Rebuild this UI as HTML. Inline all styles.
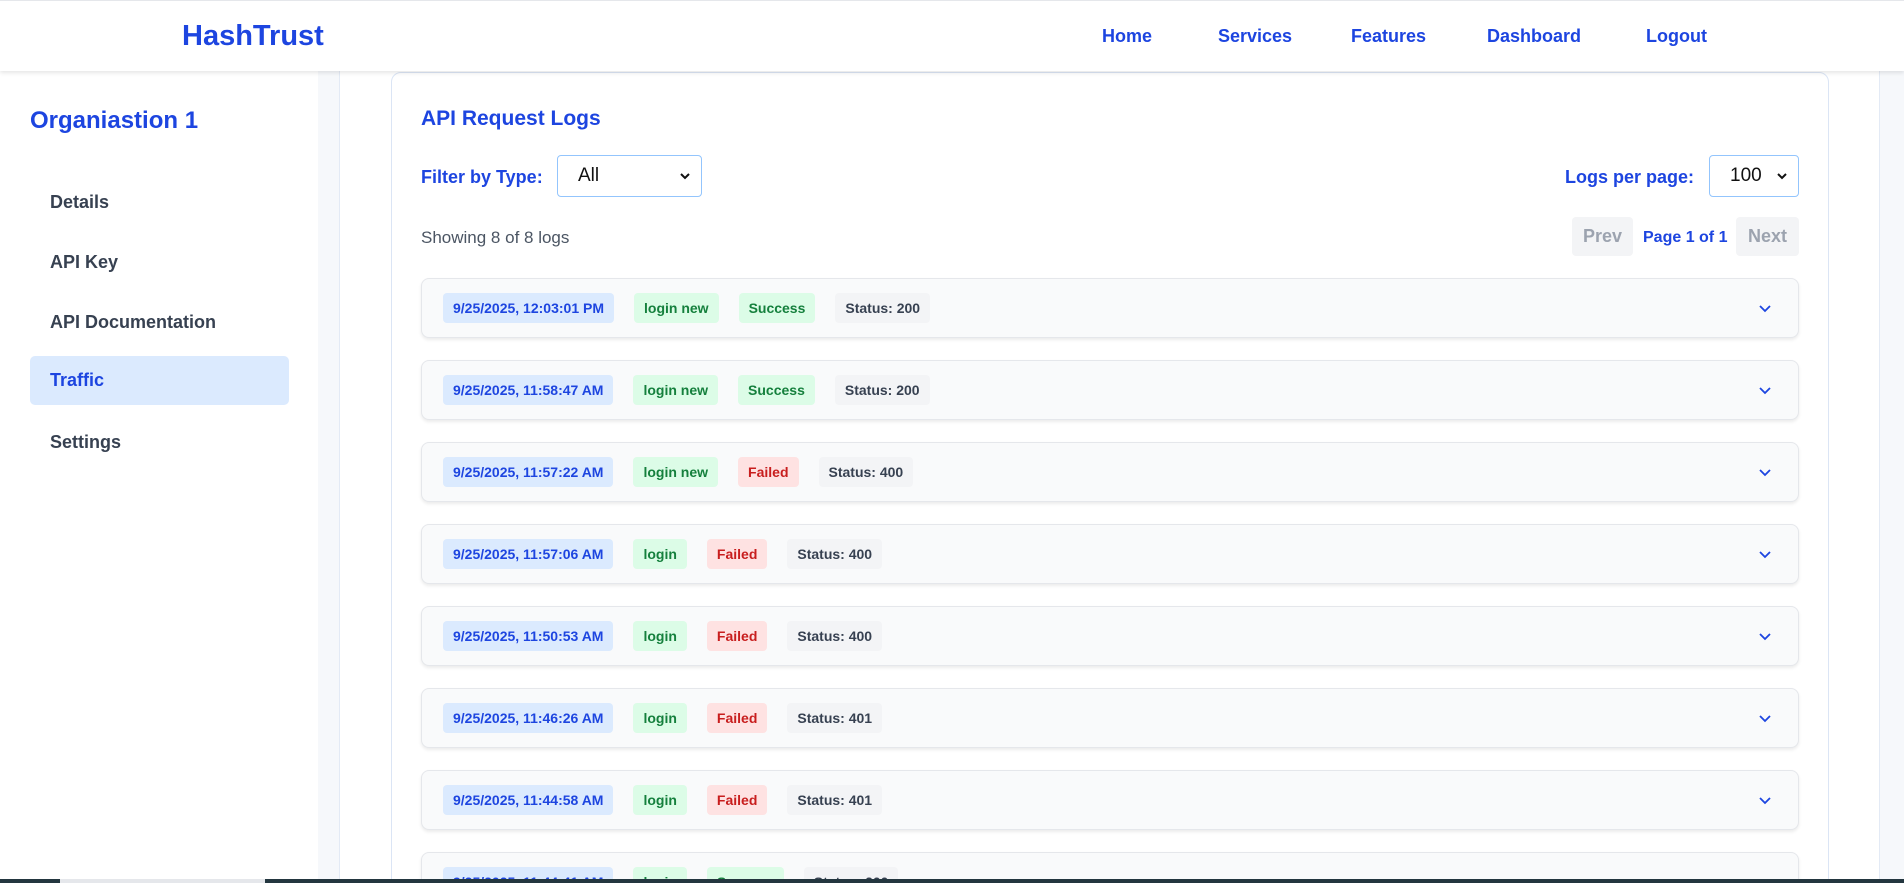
<!DOCTYPE html>
<html><head><meta charset="utf-8"><style>
*{box-sizing:border-box;margin:0;padding:0}
html,body{width:1904px;height:883px;overflow:hidden}
body{background:#fff;font-family:"Liberation Sans",sans-serif;position:relative}
.hdr{position:absolute;left:0;top:0;width:1904px;height:71px;background:#fff;box-shadow:0 2px 4px rgba(0,0,0,.1);z-index:5;border-top:1px solid #e5e7eb}
.logo{position:absolute;left:182px;top:19px;font-size:29px;font-weight:bold;color:#1d45e0}
.nav a{position:absolute;top:25px;font-size:18px;font-weight:bold;color:#1d45e0;text-decoration:none}
.side{position:absolute;left:0;top:71px;width:318px;height:812px;background:#fff}
.strip{position:absolute;left:318px;top:71px;width:22px;height:812px;background:#f6f8fb;border-right:1px solid #e3eaf5}
.rstrip{position:absolute;left:1879px;top:71px;width:25px;height:812px;background:#f6f8fb;border-left:1px solid #e3eaf5}
.org{position:absolute;left:30px;font-size:24px;font-weight:bold;color:#1d45e0}
.si{position:absolute;left:30px;width:259px;height:49px;line-height:49px;padding-left:20px;font-size:18px;font-weight:bold;color:#374151;border-radius:5px}
.si.act{background:#dbeafe;color:#1d45e0}
.card{position:absolute;left:391px;top:72px;width:1438px;height:830px;border:1px solid #dbe5f5;border-radius:10px;background:#fff}
.ttl{position:absolute;left:421px;top:107px;font-size:21px;font-weight:bold;color:#1d45e0}
.lbl{position:absolute;font-size:18px;font-weight:bold;color:#1d45e0}
.sel{position:absolute;height:42px;border:1px solid #93c5fd;border-radius:4px;background:#fff;font-size:19px;color:#111;padding-left:20px;line-height:40px}
.sel svg{position:absolute;right:10px;top:15px}
.show{position:absolute;left:421px;top:228px;font-size:17px;color:#4b5563}
.pb{position:absolute;top:217px;height:39px;background:#f3f4f6;border-radius:4px;color:#9ca3af;font-size:18px;font-weight:bold;text-align:center;line-height:39px}
.row{position:absolute;left:421px;width:1378px;height:60px;background:#f9fafb;border:1px solid #e5e7eb;border-radius:8px;box-shadow:0 2px 3px rgba(0,0,0,.08);display:flex;align-items:center;padding-left:21px}
.b{height:30px;line-height:30px;padding:0 10px;border-radius:4px;font-size:14px;font-weight:bold;margin-right:20px;white-space:nowrap}
.d{background:#dbeafe;color:#1d45e0}
.g{background:#dcfce7;color:#15803d}
.r{background:#fee2e2;color:#c81e1e}
.s{background:#f3f4f6;color:#374151}
.chev{position:absolute;right:26px;top:25px}
.bot{position:absolute;left:0;top:879px;width:1904px;height:4px;background:#23363f;z-index:9}
.bot i{position:absolute;left:60px;top:0;width:205px;height:4px;background:#e5e7eb}
</style></head><body>
<div class="hdr"><div class="logo">HashTrust</div>
<div class="nav"><a style="left:1102px">Home</a><a style="left:1218px">Services</a><a style="left:1351px">Features</a><a style="left:1487px">Dashboard</a><a style="left:1646px">Logout</a></div></div>
<div class="side">
<div class="org" style="top:36px">Organiastion 1</div>
<div class="si" style="top:107px">Details</div>
<div class="si" style="top:167px">API Key</div>
<div class="si" style="top:227px">API Documentation</div>
<div class="si act" style="top:285px">Traffic</div>
<div class="si" style="top:347px">Settings</div>
</div>
<div class="strip"></div><div class="rstrip"></div>
<div class="card"></div>
<div class="ttl">API Request Logs</div>
<div class="lbl" style="left:421px;top:167px">Filter by Type:</div>
<div class="sel" style="left:557px;top:155px;width:145px">All<svg width="12" height="10" viewBox="0 0 12 10"><path d="M2 3l4 4 4-4" stroke="#111" stroke-width="2" fill="none"/></svg></div>
<div class="lbl" style="left:1565px;top:167px">Logs per page:</div>
<div class="sel" style="left:1709px;top:155px;width:90px">100<svg width="12" height="10" viewBox="0 0 12 10"><path d="M2 3l4 4 4-4" stroke="#111" stroke-width="2" fill="none"/></svg></div>
<div class="show">Showing 8 of 8 logs</div>
<div class="pb" style="left:1572px;width:61px">Prev</div>
<div class="lbl" style="left:1643px;top:229px;font-size:16px">Page 1 of 1</div>
<div class="pb" style="left:1736px;width:63px">Next</div>

<div class="row" style="top:278px"><span class="b d">9/25/2025, 12:03:01 PM</span><span class="b g">login new</span><span class="b g">Success</span><span class="b s">Status: 200</span><svg class="chev" width="14" height="10" viewBox="0 0 14 10"><path d="M2 2l5 5 5-5" stroke="#1d45e0" stroke-width="1.8" fill="none"/></svg></div>
<div class="row" style="top:360px"><span class="b d">9/25/2025, 11:58:47 AM</span><span class="b g">login new</span><span class="b g">Success</span><span class="b s">Status: 200</span><svg class="chev" width="14" height="10" viewBox="0 0 14 10"><path d="M2 2l5 5 5-5" stroke="#1d45e0" stroke-width="1.8" fill="none"/></svg></div>
<div class="row" style="top:442px"><span class="b d">9/25/2025, 11:57:22 AM</span><span class="b g">login new</span><span class="b r">Failed</span><span class="b s">Status: 400</span><svg class="chev" width="14" height="10" viewBox="0 0 14 10"><path d="M2 2l5 5 5-5" stroke="#1d45e0" stroke-width="1.8" fill="none"/></svg></div>
<div class="row" style="top:524px"><span class="b d">9/25/2025, 11:57:06 AM</span><span class="b g">login</span><span class="b r">Failed</span><span class="b s">Status: 400</span><svg class="chev" width="14" height="10" viewBox="0 0 14 10"><path d="M2 2l5 5 5-5" stroke="#1d45e0" stroke-width="1.8" fill="none"/></svg></div>
<div class="row" style="top:606px"><span class="b d">9/25/2025, 11:50:53 AM</span><span class="b g">login</span><span class="b r">Failed</span><span class="b s">Status: 400</span><svg class="chev" width="14" height="10" viewBox="0 0 14 10"><path d="M2 2l5 5 5-5" stroke="#1d45e0" stroke-width="1.8" fill="none"/></svg></div>
<div class="row" style="top:688px"><span class="b d">9/25/2025, 11:46:26 AM</span><span class="b g">login</span><span class="b r">Failed</span><span class="b s">Status: 401</span><svg class="chev" width="14" height="10" viewBox="0 0 14 10"><path d="M2 2l5 5 5-5" stroke="#1d45e0" stroke-width="1.8" fill="none"/></svg></div>
<div class="row" style="top:770px"><span class="b d">9/25/2025, 11:44:58 AM</span><span class="b g">login</span><span class="b r">Failed</span><span class="b s">Status: 401</span><svg class="chev" width="14" height="10" viewBox="0 0 14 10"><path d="M2 2l5 5 5-5" stroke="#1d45e0" stroke-width="1.8" fill="none"/></svg></div>
<div class="row" style="top:852px"><span class="b d">9/25/2025, 11:44:41 AM</span><span class="b g">login</span><span class="b g">Success</span><span class="b s">Status: 200</span><svg class="chev" width="14" height="10" viewBox="0 0 14 10"><path d="M2 2l5 5 5-5" stroke="#1d45e0" stroke-width="1.8" fill="none"/></svg></div>
<div class="bot"><i></i></div>
</body></html>
